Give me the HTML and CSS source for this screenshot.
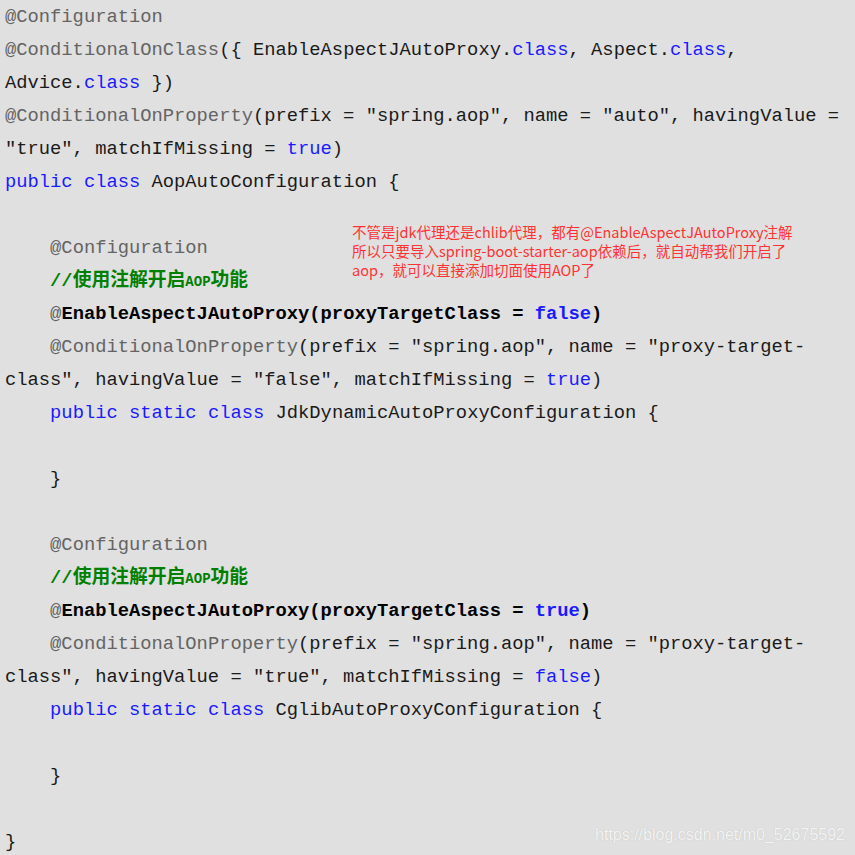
FILE: index.html
```html
<!DOCTYPE html>
<html lang="zh-CN">
<head>
    <meta charset="UTF-8">
    <title>AopAutoConfiguration</title>
    <link rel="stylesheet" href="styles.css">
</head>
<body>
    <div class="code">
        <div class="line"><span class="ann">@Configuration</span></div>
        <div class="line"><span class="ann">@ConditionalOnClass</span>({ EnableAspectJAutoProxy.<span class="kw">class</span>, Aspect.<span class="kw">class</span>,</div>
        <div class="line">Advice.<span class="kw">class</span> })</div>
        <div class="line"><span class="ann">@ConditionalOnProperty</span>(prefix = "spring.aop", name = "auto", havingValue =</div>
        <div class="line">"true", matchIfMissing = <span class="kw">true</span>)</div>
        <div class="line"><span class="kw">public</span> <span class="kw">class</span> AopAutoConfiguration {</div>
        <div class="line"> </div>
        <div class="line">    <span class="ann">@Configuration</span></div>
        <div class="line">    <span class="comment">//使用注解开启<span class="small">AOP</span>功能</span></div>
        <div class="line">    <span class="ann">@</span><b>EnableAspectJAutoProxy(proxyTargetClass = <span class="kw">false</span>)</b></div>
        <div class="line">    <span class="ann">@ConditionalOnProperty</span>(prefix = "spring.aop", name = "proxy-target-</div>
        <div class="line">class", havingValue = "false", matchIfMissing = <span class="kw">true</span>)</div>
        <div class="line">    <span class="kw">public</span> <span class="kw">static</span> <span class="kw">class</span> JdkDynamicAutoProxyConfiguration {</div>
        <div class="line"> </div>
        <div class="line">    }</div>
        <div class="line"> </div>
        <div class="line">    <span class="ann">@Configuration</span></div>
        <div class="line">    <span class="comment">//使用注解开启<span class="small">AOP</span>功能</span></div>
        <div class="line">    <span class="ann">@</span><b>EnableAspectJAutoProxy(proxyTargetClass = <span class="kw">true</span>)</b></div>
        <div class="line">    <span class="ann">@ConditionalOnProperty</span>(prefix = "spring.aop", name = "proxy-target-</div>
        <div class="line">class", havingValue = "true", matchIfMissing = <span class="kw">false</span>)</div>
        <div class="line">    <span class="kw">public</span> <span class="kw">static</span> <span class="kw">class</span> CglibAutoProxyConfiguration {</div>
        <div class="line"> </div>
        <div class="line">    }</div>
        <div class="line"> </div>
        <div class="line">}</div>
    </div>

    <div class="note">
        不管是jdk代理还是chlib代理，都有@EnableAspectJAutoProxy注解<br>
        所以只要导入spring-boot-starter-aop依赖后，就自动帮我们开启了<br>
        aop，就可以直接添加切面使用AOP了
    </div>

    <div class="watermark">https://blog.csdn.net/m0_52675592</div>
</body>
</html>
```

FILE: styles.css
```css
html, body {
    margin: 0;
    padding: 0;
    background-color: #e0e0e0;
}
body {
    position: relative;
    width: 855px;
    height: 855px;
    overflow: hidden;
}
.code {
    padding: 1px 0 0 5px;
    font-family: "Liberation Mono", "Noto Sans CJK SC", monospace;
    font-size: 18.8px;
    color: #1a1a1a;
}
.line {
    height: 33px;
    line-height: 33px;
    white-space: pre;
}
.ann {
    color: #646464;
    font-weight: normal;
}
.kw {
    color: #1a1aff;
}
b {
    font-weight: bold;
    color: #000;
}
.comment {
    color: #008000;
    font-weight: bold;
}
.comment .small {
    font-family: "Liberation Mono", monospace;
    font-size: 14px;
}
.note {
    position: absolute;
    left: 352px;
    top: 222px;
    font-family: "Noto Sans CJK SC", sans-serif;
    font-size: 14.5px;
    line-height: 19px;
    color: #ff3333;
}
.watermark {
    position: absolute;
    right: 10px;
    top: 826px;
    font-family: "Liberation Sans", Arial, sans-serif;
    font-size: 16px;
    color: #f4f4f4;
    text-shadow: 0 0 1px #b8b8b8;
}
```
